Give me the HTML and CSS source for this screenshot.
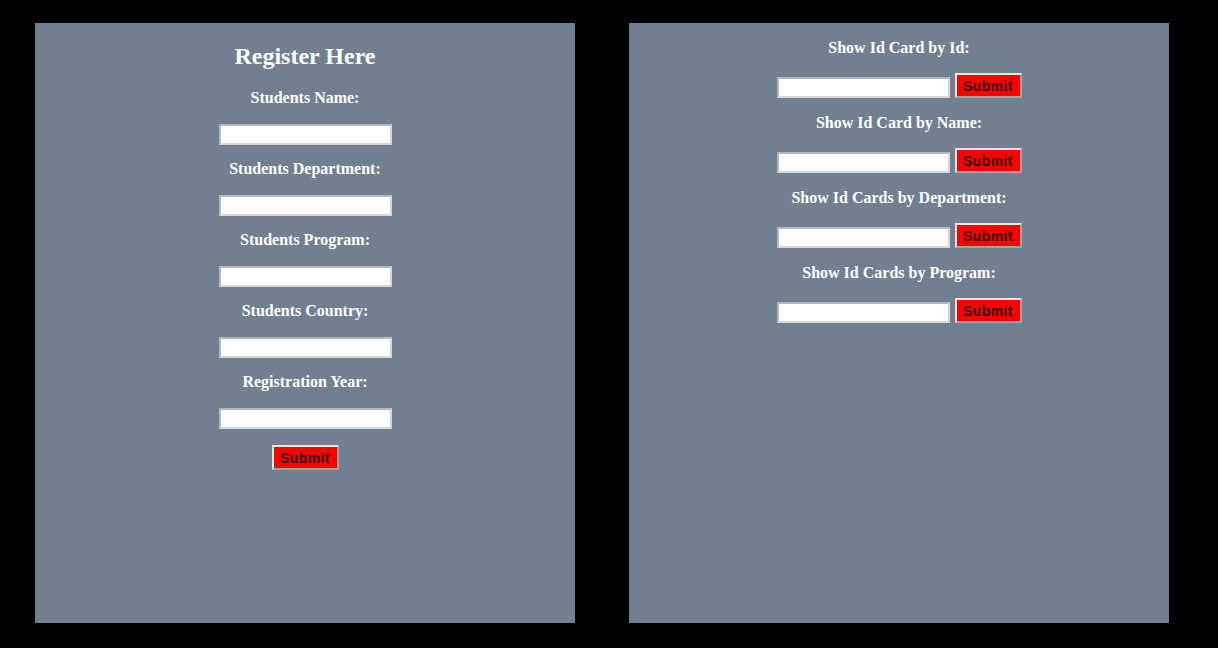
FILE: index.html
```html
<!DOCTYPE html>
<html>
<head>
<meta charset="utf-8">
<link rel="stylesheet" href="styles.css">
</head>
<body>
<div class="page">
  <section class="panel panel-left">
    <h2 class="title">Register Here</h2>
    <label class="label">Students Name:</label>
    <input class="field" type="text">
    <label class="label">Students Department:</label>
    <input class="field" type="text">
    <label class="label">Students Program:</label>
    <input class="field" type="text">
    <label class="label">Students Country:</label>
    <input class="field" type="text">
    <label class="label">Registration Year:</label>
    <input class="field" type="text">
    <button class="btn btn-reg">Submit</button>
  </section>
  <section class="panel panel-right">
    <label class="label">Show Id Card by Id:</label>
    <div class="row"><input class="field" type="text"><button class="btn">Submit</button></div>
    <label class="label">Show Id Card by Name:</label>
    <div class="row"><input class="field" type="text"><button class="btn">Submit</button></div>
    <label class="label">Show Id Cards by Department:</label>
    <div class="row"><input class="field" type="text"><button class="btn">Submit</button></div>
    <label class="label">Show Id Cards by Program:</label>
    <div class="row"><input class="field" type="text"><button class="btn">Submit</button></div>
  </section>
</div>
</body>
</html>
```
FILE: styles.css
```css
html, body {
  margin: 0;
  padding: 0;
  background: #000;
  height: 100%;
}
body {
  font-family: "Liberation Serif", "Times New Roman", serif;
  color: #fff;
}
.page {
  display: flex;
  gap: 54px;
  padding: 23px 0 0 35px;
}
.panel {
  width: 540px;
  height: 600px;
  background: #708090;
  display: flex;
  flex-direction: column;
  align-items: center;
  box-sizing: border-box;
}
.panel-left {
  padding-top: 19px;
}
.panel-right {
  padding-top: 16px;
}
.title {
  margin: 0 0 19px;
  font-size: 24px;
  line-height: 28px;
  font-weight: bold;
}
.label {
  display: block;
  font-size: 16px;
  line-height: 18px;
  font-weight: bold;
  margin-bottom: 16px;
}
.panel-left .label {
  margin-bottom: 17px;
}
.field {
  width: 173px;
  height: 21px;
  box-sizing: border-box;
  border: 2px solid #c4c8cc;
  border-color: #b4b8bc #d4d6d8 #d4d6d8 #b4b8bc;
  background: #fff;
  padding: 1px 2px;
  margin: 0 0 15px;
  font-family: "Liberation Sans", Arial, sans-serif;
  font-size: 13px;
}
.btn {
  width: 67px;
  height: 25px;
  box-sizing: border-box;
  background: #ff0000;
  border: 2px solid #dcdcdc;
  border-color: #e6e6e6 #a0a4a8 #a0a4a8 #e6e6e6;
  color: #2a0000;
  font-family: "Liberation Sans", Arial, sans-serif;
  font-weight: bold;
  font-size: 14px;
  letter-spacing: 0.4px;
  padding: 0;
}
.btn-reg {
  margin-top: 1px;
}
.row {
  display: flex;
  align-items: flex-end;
  gap: 5px;
  margin-bottom: 16px;
}
.row .field {
  margin: 0;
}
```
